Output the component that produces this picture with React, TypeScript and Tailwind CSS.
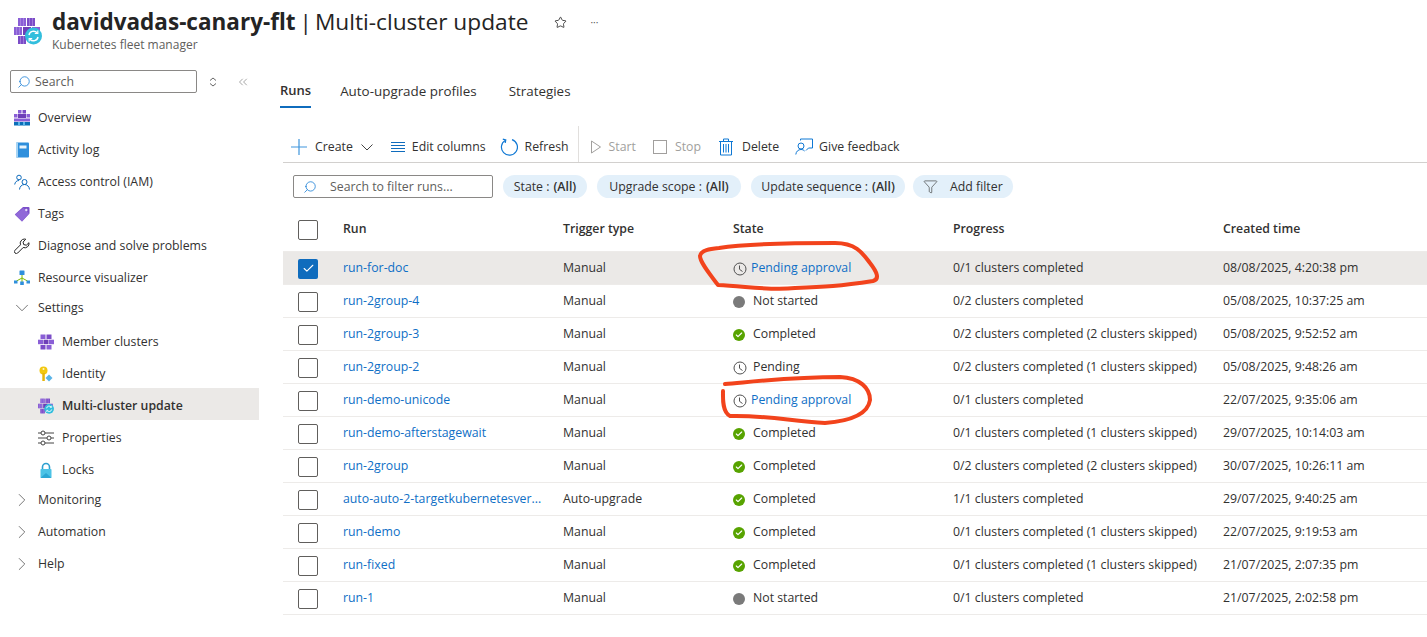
import { Check, ChevronDown, ChevronRight, ChevronsLeft, Filter, Search, Star } from "lucide-react";
import type { ReactNode } from "react";

const FleetIcon = () => (
  <svg width="16" height="16" viewBox="0 0 16 16">
    <rect x="2.500" y="0.500" width="5" height="4.500" fill="#8a5fd6" />
    <rect x="8.500" y="0.500" width="5" height="4.500" fill="#7b4cc7" />
    <rect x="0" y="5.700" width="5" height="4.500" fill="#8a5fd6" />
    <rect x="5.500" y="5.700" width="5" height="4.500" fill="#6e3fb8" />
    <rect x="11" y="5.700" width="5" height="4.500" fill="#8a5fd6" />
    <rect x="2.500" y="11" width="5" height="4.500" fill="#7b4cc7" />
    <rect x="8.500" y="11" width="5" height="4.500" fill="#8a5fd6" />
  </svg>
);

const UpdateFleetIcon = ({ size = 16 }: { size?: number }) => (
  <svg width={size} height={size} viewBox="0 0 28 28">
    <rect x="4" y="1" width="8" height="8" fill="#8a5fd6" />
    <rect x="13" y="1" width="8" height="8" fill="#7b4cc7" />
    <rect x="0" y="10" width="8" height="8" fill="#8a5fd6" />
    <rect x="9" y="10" width="8" height="8" fill="#6e3fb8" />
    <rect x="18" y="10" width="8" height="8" fill="#8a5fd6" />
    <rect x="4" y="19" width="8" height="8" fill="#7b4cc7" />
    <path d="M6.500 1v8M9.500 1v8M15.500 1v8M18.500 1v8M2.500 10v8M5.500 10v8M6.500 19v8M9.500 19v8" stroke="#b79be8" strokeWidth=".6" />
    <circle cx="19.500" cy="19" r="8.500" fill="#32bedd" />
    <path d="M15 18a4.600 4.600 0 0 1 8-2.200M24 20a4.600 4.600 0 0 1-8 2.200" fill="none" stroke="#fff" strokeWidth="1.500" />
    <path d="M23.800 13.500v3h-3M15.200 24.500v-3h3" fill="none" stroke="#fff" strokeWidth="1.200" />
  </svg>
);

const OverviewIcon = () => (
  <svg width="16" height="16" viewBox="0 0 16 16">
    <rect x="4" y="0" width="3.500" height="3.500" fill="#8a5fd6" />
    <rect x="8.500" y="0" width="3.500" height="3.500" fill="#7b4cc7" />
    <rect x="0" y="4" width="3.500" height="3.500" fill="#8a5fd6" />
    <rect x="4" y="4" width="8" height="4" fill="#6e3fb8" />
    <rect x="12.500" y="4" width="3.500" height="3.500" fill="#8a5fd6" />
    <rect x="0" y="8.500" width="16" height="3" fill="#8a5fd6" />
    <rect x="0" y="12" width="16" height="3.500" fill="#0b6fb8" />
    <path d="M4 12h2v3.500H4zM9 12h2v3.500H9z" fill="#5ab4e8" />
  </svg>
);

const LogIcon = () => (
  <svg width="16" height="16" viewBox="0 0 16 16">
    <rect x="2" y="0.500" width="13" height="15" rx="1" fill="#2f8fdc" />
    <rect x="2" y="0.500" width="2" height="15" fill="#a6d4f4" />
    <rect x="5.500" y="3.500" width="7" height="3" fill="#e8f4fc" />
  </svg>
);

const PeopleIcon = () => (
  <svg width="16" height="16" viewBox="0 0 16 16" fill="none" stroke="#0f6cbd" strokeWidth="1">
    <circle cx="5" cy="3.500" r="2.300" />
    <path d="M0.700 10.500c.4-2.500 2-4 4.300-4" />
    <circle cx="10.500" cy="8" r="2.500" />
    <path d="M5.500 15.500c.2-3 2.300-5 5-5s4.800 2 5 5" />
  </svg>
);

const TagIcon = () => (
  <svg width="16" height="16" viewBox="0 0 16 16">
    <path d="M9 1h5.500a1 1 0 0 1 1 1v5.500L8 15.500.8 8.500z" fill="#7a4fc9" />
    <path d="M1 8.500 9.500 2 15 7.500 8 15.500z" fill="#9068d8" />
    <circle cx="12.300" cy="4" r="1.200" fill="#e6dcf7" />
  </svg>
);

const WrenchIcon = () => (
  <svg width="16" height="16" viewBox="0 0 16 16" fill="none" stroke="#222" strokeWidth="1">
    <path d="M10.500 1a4.300 4.300 0 0 0-4 5.800L1 12.300a1.900 1.900 0 0 0 2.700 2.700l5.500-5.500A4.300 4.300 0 0 0 15 4.700l-2.700 2.500-2.600-.6-.6-2.500L11.700 1.200A4 4 0 0 0 10.500 1z" />
  </svg>
);

const VisualizerIcon = () => (
  <svg width="16" height="16" viewBox="0 0 16 16">
    <path d="M8 5v8M2.500 11 8 8l5.500 3" fill="none" stroke="#7fba00" strokeWidth="1" />
    <rect x="5.500" y="0.500" width="5" height="4.500" rx=".5" fill="#2f8fdc" />
    <rect x="0" y="10.500" width="3.500" height="3" fill="#2f8fdc" />
    <rect x="6.200" y="11.500" width="3.600" height="3.500" fill="#2f8fdc" />
    <rect x="12.500" y="10.500" width="3.500" height="3" fill="#2f8fdc" />
  </svg>
);

const KeyIcon = () => (
  <svg width="16" height="16" viewBox="0 0 16 16">
    <circle cx="5.500" cy="4.500" r="4" fill="#f2c811" />
    <rect x="4.300" y="7" width="2.500" height="8" fill="#e5b50c" />
    <circle cx="5.500" cy="3" r="1" fill="#fff6c9" />
    <path d="M11 8.500 14.500 12 11 15.500 7.500 12z" fill="#5ab4e8" />
  </svg>
);

const SlidersIcon = () => (
  <svg width="16" height="16" viewBox="0 0 16 16" fill="none" stroke="#444" strokeWidth="1">
    <path d="M0 3h3M7 3h9M0 8h9M13 8h3M0 13h3M7 13h9" />
    <circle cx="5" cy="3" r="2" />
    <circle cx="11" cy="8" r="2" />
    <circle cx="5" cy="13" r="2" />
  </svg>
);

const LockIcon = () => (
  <svg width="16" height="16" viewBox="0 0 16 16">
    <path d="M4.500 8V5a3.500 3.500 0 0 1 7 0v3" fill="none" stroke="#2c9fd0" strokeWidth="1.600" />
    <rect x="2.500" y="7" width="11" height="9" rx=".8" fill="#4cc3e6" />
    <path d="M2.500 16 8 11l5.500 5z" fill="#2ca7d4" />
  </svg>
);

const SortIcon = () => (
  <svg width="10" height="12" viewBox="0 0 10 12" fill="none" stroke="#666" strokeWidth="1">
    <path d="M2 4.500 5 2l3 2.500M2 7.500 5 10l3-2.500" />
  </svg>
);

const RefreshIcon = () => (
  <svg width="18" height="18" viewBox="0 0 18 18" fill="none" stroke="#0f78d4" strokeWidth="1.200">
    <path d="M5.500 2.200A8 8 0 1 0 12 1.600" />
    <path d="M2.800 1.200 5.800 2l-.6 3" />
  </svg>
);

const ColumnsIcon = () => (
  <svg width="14" height="12" viewBox="0 0 14 12" stroke="#0f6cbd" strokeWidth="1">
    <path d="M0 1.500h14M0 4.500h14M0 7.500h14M0 10.500h14" />
  </svg>
);

const TrashIcon = () => (
  <svg width="14" height="18" viewBox="0 0 14 18" fill="none" stroke="#0f78d4" strokeWidth="1">
    <path d="M0 3.500h14M4.500 3.500V1h5v2.500M1.500 3.500v13.500h11V3.500M4.500 6v8.500M7 6v8.500M9.500 6v8.500" />
  </svg>
);

const FeedbackIcon = () => (
  <svg width="18" height="18" viewBox="0 0 18 18" fill="none" stroke="#0f78d4" strokeWidth="1">
    <circle cx="6" cy="8" r="3" />
    <path d="M.8 16.500c.3-3 2.400-5 5.200-5 1.500 0 2.700.5 3.600 1.500" />
    <path d="M5.500 2.500V1h12v9h-4l-2.500 2.500" />
  </svg>
);

const ClockIcon = () => (
  <svg width="14" height="14" viewBox="0 0 14 14" fill="none" stroke="#505050" strokeWidth="1">
    <circle cx="7" cy="7" r="6" />
    <path d="M6.500 3.500V7.300L9.500 9.500" />
  </svg>
);

const DoneIcon = () => (
  <span className="flex h-3 w-3 items-center justify-center rounded-full bg-[#57a300]">
    <Check size={8} strokeWidth={3.500} color="#fff" />
  </span>
);

type NavItem = { label: string; icon: ReactNode; indent?: boolean; active?: boolean };

const navTop: NavItem[] = [
  { label: "Overview", icon: <OverviewIcon /> },
  { label: "Activity log", icon: <LogIcon /> },
  { label: "Access control (IAM)", icon: <PeopleIcon /> },
  { label: "Tags", icon: <TagIcon /> },
  { label: "Diagnose and solve problems", icon: <WrenchIcon /> },
  { label: "Resource visualizer", icon: <VisualizerIcon /> },
];

const navSettings: NavItem[] = [
  { label: "Member clusters", icon: <FleetIcon /> },
  { label: "Identity", icon: <KeyIcon /> },
  { label: "Multi-cluster update", icon: <UpdateFleetIcon />, active: true },
  { label: "Properties", icon: <SlidersIcon /> },
  { label: "Locks", icon: <LockIcon /> },
];

type Run = { name: string; trigger: string; state: string; progress: string; created: string };

const runs: Run[] = [
  { name: "run-for-doc", trigger: "Manual", state: "approval", progress: "0/1 clusters completed", created: "08/08/2025, 4:20:38 pm" },
  { name: "run-2group-4", trigger: "Manual", state: "idle", progress: "0/2 clusters completed", created: "05/08/2025, 10:37:25 am" },
  { name: "run-2group-3", trigger: "Manual", state: "done", progress: "0/2 clusters completed (2 clusters skipped)", created: "05/08/2025, 9:52:52 am" },
  { name: "run-2group-2", trigger: "Manual", state: "pending", progress: "0/2 clusters completed (1 clusters skipped)", created: "05/08/2025, 9:48:26 am" },
  { name: "run-demo-unicode", trigger: "Manual", state: "approval", progress: "0/1 clusters completed", created: "22/07/2025, 9:35:06 am" },
  { name: "run-demo-afterstagewait", trigger: "Manual", state: "done", progress: "0/1 clusters completed (1 clusters skipped)", created: "29/07/2025, 10:14:03 am" },
  { name: "run-2group", trigger: "Manual", state: "done", progress: "0/2 clusters completed (2 clusters skipped)", created: "30/07/2025, 10:26:11 am" },
  { name: "auto-auto-2-targetkubernetesver...", trigger: "Auto-upgrade", state: "done", progress: "1/1 clusters completed", created: "29/07/2025, 9:40:25 am" },
  { name: "run-demo", trigger: "Manual", state: "done", progress: "0/1 clusters completed (1 clusters skipped)", created: "22/07/2025, 9:19:53 am" },
  { name: "run-fixed", trigger: "Manual", state: "done", progress: "0/1 clusters completed (1 clusters skipped)", created: "21/07/2025, 2:07:35 pm" },
  { name: "run-1", trigger: "Manual", state: "idle", progress: "0/1 clusters completed", created: "21/07/2025, 2:02:58 pm" },
];

const StateCell = ({ state }: { state: string }) => {
  if (state === "approval")
    return (
      <div className="flex items-center gap-1 text-[#0f6fc6]">
        <ClockIcon />
        <span>Pending approval</span>
      </div>
    );
  if (state === "pending")
    return (
      <div className="flex items-center gap-[6px]">
        <ClockIcon />
        <span>Pending</span>
      </div>
    );
  return (
    <div className="flex items-center gap-2">
      <span className="flex w-3 justify-center">
        {state === "done" ? <DoneIcon /> : <span className="h-3 w-3 rounded-full bg-[#7a7a7a]" />}
      </span>
      <span>{state === "done" ? "Completed" : "Not started"}</span>
    </div>
  );
};

const Box = ({ checked }: { checked?: boolean }) =>
  checked ? (
    <span className="flex h-5 w-5 items-center justify-center rounded-[2px] bg-[#0f6cbd]">
      <Check size={13} color="#fff" strokeWidth={2} />
    </span>
  ) : (
    <span className="block h-5 w-5 rounded-[2px] border border-[#605e5c]" />
  );

const Pill = ({ label, value, width }: { label: string; value: string; width: string }) => (
  <div className={`flex h-[23px] items-center justify-center rounded-full bg-[#e3f0fa] pt-[2px] text-[#323130] ${width}`}>
    {label} : <span className="ml-1 font-semibold">{value}</span>
  </div>
);

const NavRow = ({ item }: { item: NavItem }) => (
  <div
    className={`flex h-8 items-center pt-1 ${item.indent ? "pl-[38px]" : "pl-[14px]"} ${
      item.active ? "bg-[#ebe9e7] font-semibold" : ""
    }`}
  >
    <span className="mr-2 flex w-4 justify-center">{item.icon}</span>
    <span>{item.label}</span>
  </div>
);

const Group = ({ label, open, h = "h-8" }: { label: string; open?: boolean; h?: string }) => (
  <div className={`flex ${h} items-center pl-[14px] pt-1`}>
    <span className="mr-2 flex w-4 justify-center text-[#444]">
      {open ? <ChevronDown size={22} strokeWidth={0.8} className="shrink-0" /> : <ChevronRight size={22} strokeWidth={0.8} className="shrink-0" />}
    </span>
    <span>{label}</span>
  </div>
);

const Tool = ({ icon, label, muted, className = "" }: { icon: ReactNode; label: string; muted?: boolean; className?: string }) => (
  <div className={`flex items-center ${muted ? "text-[#a19f9d]" : "text-[#323130]"} ${className}`}>
    {icon}
    <span>{label}</span>
  </div>
);

export default function App() {
  return (
    <div className="relative h-[637px] w-[1427px] overflow-hidden bg-white font-['Open_Sans',sans-serif] text-[12.300px] text-[#323130]">
      <header className="flex h-[70px] pl-[14px] pt-2">
        <div className="mr-[10px] mt-[9px]">
          <UpdateFleetIcon size={28} />
        </div>
        <div>
          <div className="flex h-7 items-center text-[22.500px] leading-7 text-[#242424]">
            <span className="font-bold">davidvadas-canary-flt</span>
            <span className="ml-1">|</span>
            <span className="ml-[3px] text-[22.700px]">Multi-cluster update</span>
            <Star size={13} className="ml-[26px]" strokeWidth={1.500} />
            <span className="ml-[23px] text-[10px] leading-none text-[#555]">···</span>
          </div>
          <div className="text-[12px] text-[#605e5c]">Kubernetes fleet manager</div>
        </div>
      </header>
      <div className="flex">
        <aside className="w-[259px] shrink-0">
          <div className="flex items-center pl-[10px]">
            <div className="flex h-[23px] w-[187px] items-center rounded-[2px] border border-[#8a8886] pl-[6px] pt-[1px] text-[#605e5c]">
              <Search size={14} color="#0f78d4" strokeWidth={1.300} className="-scale-x-100" />
              <span className="ml-1">Search</span>
            </div>
            <span className="ml-[11px]">
              <SortIcon />
            </span>
            <ChevronsLeft size={14} color="#666" strokeWidth={1} className="ml-[18px]" />
          </div>
          <nav className="mt-[7px]">
            {navTop.map((item) => (
              <NavRow key={item.label} item={item} />
            ))}
            <Group label="Settings" open h="h-[28px]" />
            <div className="mt-1">
              {navSettings.map((item) => (
                <NavRow key={item.label} item={{ ...item, indent: true }} />
              ))}
            </div>
            <Group label="Monitoring" h="h-[28px]" />
            <Group label="Automation" h="h-9" />
            <Group label="Help" h="h-7" />
          </nav>
        </aside>
        <main className="min-w-0 flex-1">
          <div className="flex h-[38px] items-start gap-[31px] pl-[21px] pt-[11px] text-[13.400px]">
            <div className="-mr-[2px] border-b-2 border-[#0f6cbd] pb-[5px] text-[13px] font-semibold">Runs</div>
            <div>Auto-upgrade profiles</div>
            <div className="ml-[1px]">Strategies</div>
          </div>
          <div className="ml-[24px]">
            <div className="mt-[18px] flex h-[37px] items-center border-b border-[#d2d0ce] pl-2 pt-[6px]">
              <svg width="16" height="16" viewBox="0 0 16 16" stroke="#3f96dd" strokeWidth="1.200">
                <path d="M8 0v16M0 8h16" />
              </svg>
              <span className="ml-2">Create</span>
              <svg width="12" height="7" viewBox="0 0 12 7" fill="none" stroke="#444" className="ml-2">
                <path d="M.500.500 6 6l5.500-5.500" />
              </svg>
              <Tool icon={<span className="mr-[7px]"><ColumnsIcon /></span>} label="Edit columns" className="ml-[18px]" />
              <Tool icon={<span className="mr-[7px]"><RefreshIcon /></span>} label="Refresh" className="ml-[14px]" />
              <div className="-mt-[6px] ml-[9px] self-stretch border-l border-[#e1dfdd]" />
              <Tool
                muted
                icon={<svg width="12" height="14" viewBox="0 0 12 14" fill="none" stroke="#a19f9d" className="mr-[7px]"><path d="M1.500 1 10.500 7l-9 6z" /></svg>}
                label="Start"
                className="ml-[11px]"
              />
              <Tool muted icon={<span className="mr-2 h-[14px] w-[14px] border border-[#a19f9d]" />} label="Stop" className="ml-[17px]" />
              <Tool icon={<span className="mr-[9px]"><TrashIcon /></span>} label="Delete" className="ml-[18px]" />
              <Tool icon={<span className="mr-[6px]"><FeedbackIcon /></span>} label="Give feedback" className="ml-4" />
            </div>
            <div className="mt-3 flex items-center gap-[10px] pl-[10px]">
              <div className="flex h-[23px] w-[200px] items-center rounded-[2px] border border-[#8a8886] pl-[9px] pt-[1px] text-[#605e5c]">
                <Search size={14} color="#0f78d4" strokeWidth={1.300} className="-scale-x-100" />
                <span className="ml-[13px]">Search to filter runs...</span>
              </div>
              <Pill label="State" value="(All)" width="w-[84px]" />
              <Pill label="Upgrade scope" value="(All)" width="w-[144px]" />
              <Pill label="Update sequence" value="(All)" width="w-[154px]" />
              <div className="-ml-[2px] flex h-[23px] w-[100px] items-center rounded-full bg-[#e3f0fa] pl-[10px]">
                <Filter size={15} strokeWidth={1} />
                <span className="ml-3 pt-[2px]">Add filter</span>
              </div>
            </div>
            <div className="mt-4 grid h-[38px] grid-cols-[60px_220px_170px_220px_270px_1fr] items-center border-b border-[#edebe9] pb-[6px] font-semibold">
              <div className="pl-[15px]"><Box /></div>
              <div>Run</div>
              <div>Trigger type</div>
              <div>State</div>
              <div>Progress</div>
              <div>Created time</div>
            </div>
            {runs.map((run, i) => (
              <div
                key={run.name}
                className={`grid h-[33px] grid-cols-[60px_220px_170px_220px_270px_1fr] items-center border-b border-[#edebe9] pt-[1px] ${
                  i === 0 ? "bg-[#ebe9e7]" : ""
                }`}
              >
                <div className="pl-[15px]"><Box checked={i === 0} /></div>
                <div className="truncate pr-2 text-[#0f6fc6]">{run.name}</div>
                <div>{run.trigger}</div>
                <StateCell state={run.state} />
                <div className="whitespace-nowrap">{run.progress}</div>
                <div className="whitespace-nowrap">{run.created}</div>
              </div>
            ))}
          </div>
        </main>
      </div>
      {/* hand-drawn marker annotations over the screenshot */}
      <svg className="pointer-events-none absolute left-0 top-0" width="1427" height="637" fill="none" stroke="#f2431c" strokeWidth="4" strokeLinecap="round" strokeLinejoin="round">
        <path d="M719 248C745 244 790 243 835 243C855 243 862 252 870 263C877 272 880 279 873 281C840 286 825 287 795 288C770 291 745 286 718 285C708 272 700 262 700 256C701 250 710 249 719 248Z" />
        <path d="M725 384C750 382 790 377 840 377C860 378 870 388 870 400C868 414 850 421 825 423C790 421 765 415 730 416C722 412 723 398 723 391" />
      </svg>
    </div>
  );
}
